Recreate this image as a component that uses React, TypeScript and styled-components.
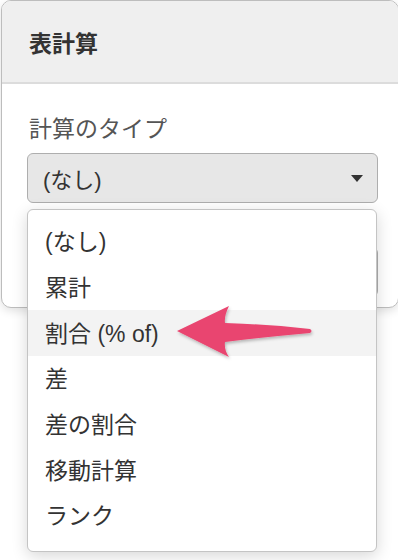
import { styled, createGlobalStyle } from "styled-components";

const GlobalStyle = createGlobalStyle`
  html, body {
    margin: 0;
    padding: 0;
    background: #ffffff;
  }
  body {
    font-family: "Liberation Sans", "Noto Sans CJK JP", sans-serif;
    color: #333333;
  }
`;

const options = ["(なし)", "累計", "割合 (% of)", "差", "差の割合", "移動計算", "ランク"];

const App = () => {
  const selected = 2;

  return (
    <>
      <GlobalStyle />
      <Page>
        <Dialog>
          <Header>
            <Title>表計算</Title>
          </Header>
          <Body>
            <Label>計算のタイプ</Label>
            <Select>
              <SelectText>(なし)</SelectText>
              <Caret />
            </Select>
            <HiddenField />
          </Body>
        </Dialog>

        <Menu>
          {options.map((opt, i) => (
            <MenuItem key={opt} $active={i === selected}>
              {opt}
            </MenuItem>
          ))}
        </Menu>

        <Arrow viewBox="0 0 150 80" aria-hidden>
          <defs>
            <filter id="arrowShadow" x="-10%" y="-20%" width="130%" height="150%">
              <feDropShadow dx="1" dy="2" stdDeviation="1.5" floodColor="#000" floodOpacity="0.25" />
            </filter>
          </defs>
          <path
            d="M7 33 L59 8 Q54 18 55 25 Q95 26 140 31 Q143 33 140 35 Q95 39 55 44 Q54 52 59 59 Z"
            fill="#e9456f"
            filter="url(#arrowShadow)"
          />
        </Arrow>
      </Page>
    </>
  );
};

export default App;

const Page = styled.div`
  position: relative;
  width: 398px;
  height: 560px;
  overflow: hidden;
`;

const Dialog = styled.div`
  margin-left: 1px;
  width: 398px;
  height: 308px;
  box-sizing: border-box;
  background: #ffffff;
  border: 1px solid #bdbdbd;
  border-radius: 10px;
  box-shadow: 0 3px 10px rgba(0, 0, 0, 0.12);
  overflow: hidden;
  display: flex;
  flex-direction: column;
`;

const Header = styled.div`
  height: 83px;
  flex-shrink: 0;
  box-sizing: border-box;
  background: #efefef;
  border-bottom: 2px solid #dcdcdc;
  display: flex;
  align-items: center;
  padding-left: 27px;
`;

const Title = styled.h1`
  margin: 0;
  font-family: "Noto Sans CJK JP", sans-serif;
  font-size: 23px;
  font-weight: 700;
  color: #333333;
`;

const Body = styled.div`
  display: flex;
  flex-direction: column;
  padding: 27px 20px 0 25px;
`;

const Label = styled.div`
  padding-left: 2px;
  font-family: "Noto Sans CJK JP", sans-serif;
  font-size: 23px;
  line-height: 32px;
  color: #555555;
`;

const Select = styled.div`
  margin-top: 10px;
  height: 50px;
  box-sizing: border-box;
  background: #e7e7e7;
  border: 1px solid #aeaeae;
  border-radius: 6px;
  display: flex;
  align-items: center;
  justify-content: space-between;
  padding: 0 14px 0 15px;
`;

const SelectText = styled.span`
  font-family: "Liberation Sans", "Noto Sans CJK JP", sans-serif;
  font-size: 22px;
  color: #333333;
`;

const Caret = styled.span`
  width: 0;
  height: 0;
  border-left: 6px solid transparent;
  border-right: 6px solid transparent;
  border-top: 7px solid #333333;
`;

const HiddenField = styled.div`
  margin-top: 44px;
  height: 50px;
  box-sizing: border-box;
  border: 1px solid #aeaeae;
  border-radius: 6px;
`;

const Menu = styled.div`
  position: absolute;
  left: 27px;
  top: 209px;
  width: 350px;
  box-sizing: border-box;
  background: #ffffff;
  border: 1px solid #c4c4c4;
  border-radius: 6px;
  box-shadow: 0 4px 16px rgba(0, 0, 0, 0.16);
  padding: 9px 0 12px;
  display: flex;
  flex-direction: column;
`;

const MenuItem = styled.div<{ $active?: boolean }>`
  height: 45.7px;
  display: flex;
  align-items: center;
  padding-left: 17px;
  padding-bottom: 3px;
  box-sizing: border-box;
  font-family: "Liberation Sans", "Noto Sans CJK JP", sans-serif;
  font-size: 23px;
  color: #333333;
  background: ${(p) => (p.$active ? "#f3f3f3" : "transparent")};
`;

const Arrow = styled.svg`
  position: absolute;
  left: 170px;
  top: 298px;
  width: 150px;
  height: 80px;
`;
